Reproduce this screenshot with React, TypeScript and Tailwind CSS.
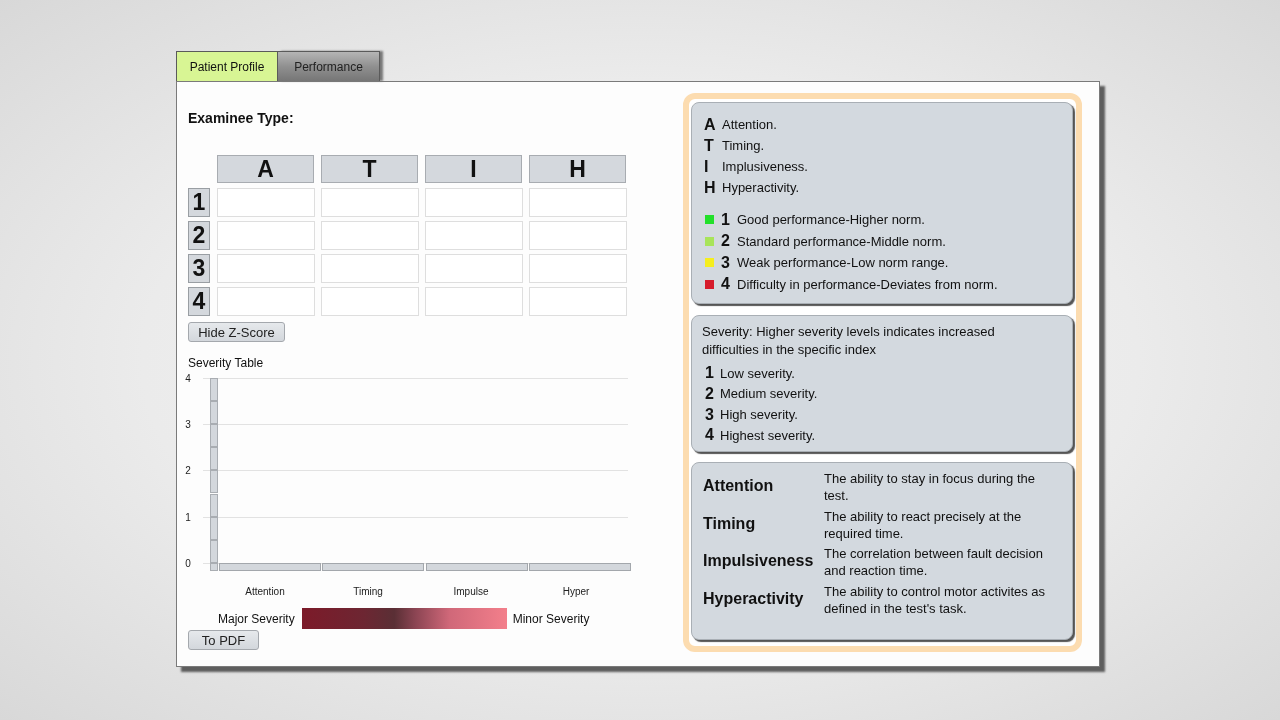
import React from "react";

const cols = ["A", "T", "I", "H"];
const rows = [1, 2, 3, 4];

const letters = [
  { k: "A", t: "Attention." },
  { k: "T", t: "Timing." },
  { k: "I", t: "Implusiveness." },
  { k: "H", t: "Hyperactivity." },
];

const norms = [
  { n: 1, color: "bg-[#22e02a]", t: "Good performance-Higher norm." },
  { n: 2, color: "bg-[#a8e45a]", t: "Standard performance-Middle norm." },
  { n: 3, color: "bg-[#f5ee1e]", t: "Weak performance-Low norm range." },
  { n: 4, color: "bg-[#d61c2c]", t: "Difficulty in performance-Deviates from norm." },
];

const severities = ["Low severity.", "Medium severity.", "High severity.", "Highest severity."];

const terms = [
  { k: "Attention", d: "The ability to stay in focus during the test." },
  { k: "Timing", d: "The ability to react precisely at the required time." },
  { k: "Impulsiveness", d: "The correlation between fault decision and reaction time." },
  { k: "Hyperactivity", d: "The ability to control motor activites as defined in the test's task." },
];

function SeverityChart() {
  // plot spans y 8..193 inside the svg, four units of ~46px
  const grid = [8, 54, 100, 147, 193];
  const segs = [8, 31, 54, 77, 100, 124, 147, 170];
  const bars = [39, 142, 246, 349];
  const labels = [
    { x: 85, t: "Attention" },
    { x: 188, t: "Timing" },
    { x: 291, t: "Impulse" },
    { x: 396, t: "Hyper" },
  ];
  return (
    <svg width="460" height="230" className="block" style={{ fontFamily: "'Liberation Sans', Arial, sans-serif" }}>
      {grid.map((y, i) => (
        <g key={y}>
          <line x1="23" x2="448" y1={y + 0.5} y2={y + 0.5} stroke="#e2e2e2" />
          <text x="8" y={y + 4} fontSize="10" textAnchor="middle" fill="#222">
            {4 - i}
          </text>
        </g>
      ))}
      {segs.map((y) => (
        <rect key={y} x="30.5" y={y + 0.5} width="7" height="22" fill="#d3d7dc" stroke="#a9adb2" />
      ))}
      <rect x="30.5" y="193.5" width="7" height="7" fill="#d3d7dc" stroke="#a9adb2" />
      {bars.map((x) => (
        <rect key={x} x={x + 0.5} y="193.5" width="101" height="7" fill="#d3d7dc" stroke="#a3a7ac" />
      ))}
      {labels.map((l) => (
        <text key={l.t} x={l.x} y="225" fontSize="10" textAnchor="middle" fill="#222">
          {l.t}
        </text>
      ))}
    </svg>
  );
}

function Btn({ children, w }: { children: React.ReactNode; w: string }) {
  return (
    <button
      className={`${w} h-[20px] rounded-[3px] border border-[#a4a8ad] bg-gradient-to-b from-[#e6e9ec] to-[#d3d7dc] text-[13px] leading-none text-[#222]`}
    >
      {children}
    </button>
  );
}

function GrayBox({ children, h, className = "" }: { children: React.ReactNode; h: string; className?: string }) {
  return (
    <div
      className={`${h} w-[382px] rounded-[8px] border border-[#a9afb5] bg-[#d3d9df] shadow-[2px_2px_1px_#555] ${className}`}
    >
      {children}
    </div>
  );
}

export default function App() {
  return (
    <div
      className="min-h-screen w-full pt-[51px] pl-[176px] text-[#111]"
      style={{ fontFamily: "'Liberation Sans', Arial, sans-serif" }}
    >
      <div className="fixed inset-0 -z-10 bg-[radial-gradient(ellipse_at_center,#f5f5f5_0%,#ebebeb_55%,#d8d8d8_100%)]" />

      {/* tabs */}
      <div className="flex h-[30px]">
        <div className="flex w-[102px] items-center justify-center border-l border-t border-r border-[#5a5a5a] bg-[#d8f594] text-[12px]">
          Patient Profile
        </div>
        <div className="flex w-[102px] items-center justify-center border-t border-r border-[#5a5a5a] bg-gradient-to-b from-[#b5b5b5] via-[#909090] to-[#767676] text-[12px] text-[#222] shadow-[3px_0_2px_#777]">
          Performance
        </div>
      </div>

      {/* main panel */}
      <div className="flex h-[586px] w-[924px] border border-[#7a7a7a] bg-[#fdfdfd] shadow-[5px_5px_2px_#5e5e5e]">
        <div className="w-[495px] pl-[11px]">
          <div className="mt-[26px] text-[14px] font-bold leading-[20px]">Examinee Type:</div>

          <div className="mt-[27px] grid grid-cols-[23px_repeat(4,98px)] gap-x-[6px] gap-y-[4px]">
            <div />
            {cols.map((c) => (
              <div
                key={c}
                className="flex h-[28px] w-[97px] items-center justify-center border border-[#a8acb1] bg-[#d4d8dd] text-[23px] font-bold leading-none"
              >
                {c}
              </div>
            ))}
            {rows.map((r) => (
              <React.Fragment key={r}>
                <div
                  className={`${r === 1 ? "mt-[1px]" : ""} flex h-[29px] w-[22px] items-center justify-center border border-[#999ea3] bg-[#d4d8dd] text-[23px] font-bold leading-none`}
                >
                  {r}
                </div>
                {cols.map((c) => (
                  <div key={c} className={`${r === 1 ? "mt-[1px]" : ""} h-[29px] w-[98px] border border-[#dedede] bg-white`} />
                ))}
              </React.Fragment>
            ))}
          </div>

          <div className="mt-[6px] flex">
            <Btn w="w-[97px]">Hide Z-Score</Btn>
          </div>

          <div className="mt-[15px] text-[12px] leading-none">Severity Table</div>
          <div className="-ml-[8px] mt-[1px]">
            <SeverityChart />
          </div>

          <div className="mt-[8px] flex h-[21px] items-center">
            <span className="ml-[30px] whitespace-nowrap text-[12px]">Major Severity</span>
            <div className="ml-[7px] h-[21px] w-[205px] bg-[linear-gradient(to_right,#7c1a29_0%,#6d2632_30%,#5a2f35_45%,#8a4452_55%,#d06879_72%,#f37f8b_100%)]" />
            <span className="ml-[6px] whitespace-nowrap text-[12px]">Minor Severity</span>
          </div>
          <div className="mt-[1px] flex">
            <Btn w="w-[71px]">To PDF</Btn>
          </div>
        </div>

        {/* legend column */}
        <div className="mt-[11px] ml-[11px] h-[559px] w-[399px] rounded-[12px] border-[6px] border-[#fcdcb0] bg-white pl-[2px] pt-[3px]">
          <GrayBox h="h-[202px]" className="px-[12px] pt-[11px]">
            {letters.map((l) => (
              <div key={l.k} className="flex h-[21px] items-center">
                <span className="w-[18px] text-[16px] font-bold">{l.k}</span>
                <span className="text-[13px]">{l.t}</span>
              </div>
            ))}
            <div className="mt-[11px]">
              {norms.map((n) => (
                <div key={n.n} className="flex h-[21.5px] items-center">
                  <span className={`ml-[1px] h-[9px] w-[9px] ${n.color}`} />
                  <span className="ml-[7px] w-[16px] text-[16px] font-bold">{n.n}</span>
                  <span className="text-[13px]">{n.t}</span>
                </div>
              ))}
            </div>
          </GrayBox>

          <GrayBox h="h-[137px]" className="mt-[11px] px-[10px] pt-[7px]">
            <div className="w-[340px] text-[13px] leading-[18px]">
              Severity: Higher severity levels indicates increased difficulties in the specific index
            </div>
            <div className="mt-[4px] ml-[3px]">
              {severities.map((s, i) => (
                <div key={s} className="flex h-[20.7px] items-center">
                  <span className="w-[15px] text-[16px] font-bold">{i + 1}</span>
                  <span className="text-[13px]">{s}</span>
                </div>
              ))}
            </div>
          </GrayBox>

          <GrayBox h="h-[178px]" className="mt-[10px] pl-[11px] pt-[7px]">
            {terms.map((t) => (
              <div key={t.k} className="flex h-[37.5px] items-start">
                <span className="mt-[4px] w-[121px] text-[16px] font-bold">{t.k}</span>
                <span className="w-[234px] text-[13px] leading-[17px]">{t.d}</span>
              </div>
            ))}
          </GrayBox>
        </div>
      </div>
    </div>
  );
}
